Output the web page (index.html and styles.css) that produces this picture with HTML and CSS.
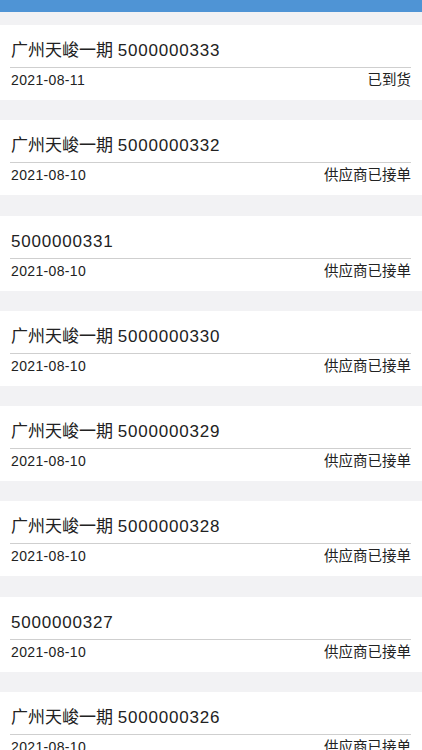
FILE: index.html
```html
<!DOCTYPE html>
<html lang="zh-CN">
<head>
<meta charset="utf-8">
<title>订单列表</title>
<link rel="stylesheet" href="styles.css">
</head>
<body>
<div class="topbar"></div>
<div class="list">
  <div class="card"><div class="title">广州天峻一期 <span class="num">5000000333</span></div><div class="meta"><span class="date">2021-08-11</span><span class="status">已到货</span></div></div>
  <div class="card"><div class="title">广州天峻一期 <span class="num">5000000332</span></div><div class="meta"><span class="date">2021-08-10</span><span class="status">供应商已接单</span></div></div>
  <div class="card"><div class="title"><span class="num">5000000331</span></div><div class="meta"><span class="date">2021-08-10</span><span class="status">供应商已接单</span></div></div>
  <div class="card"><div class="title">广州天峻一期 <span class="num">5000000330</span></div><div class="meta"><span class="date">2021-08-10</span><span class="status">供应商已接单</span></div></div>
  <div class="card"><div class="title">广州天峻一期 <span class="num">5000000329</span></div><div class="meta"><span class="date">2021-08-10</span><span class="status">供应商已接单</span></div></div>
  <div class="card"><div class="title">广州天峻一期 <span class="num">5000000328</span></div><div class="meta"><span class="date">2021-08-10</span><span class="status">供应商已接单</span></div></div>
  <div class="card"><div class="title"><span class="num">5000000327</span></div><div class="meta"><span class="date">2021-08-10</span><span class="status">供应商已接单</span></div></div>
  <div class="card"><div class="title">广州天峻一期 <span class="num">5000000326</span></div><div class="meta"><span class="date">2021-08-10</span><span class="status">供应商已接单</span></div></div>
</div>
</body>
</html>
```
FILE: styles.css
```css
html, body {
  margin: 0;
  padding: 0;
}
body {
  background: #f2f2f4;
  font-family: "Liberation Sans", "Noto Sans CJK SC", sans-serif;
  color: #222;
  overflow: hidden;
}
.topbar {
  height: 12px;
  background: #4f94d5;
}
.list {
  display: flex;
  flex-direction: column;
  gap: 20.3px;
  padding-top: 13px;
}
.card {
  background: #fff;
  height: 75px;
  padding: 0 11px 0 10px;
  display: flex;
  flex-direction: column;
}
.title {
  font-size: 17px;
  line-height: 24px;
  padding: 14px 0 4px 1px;
  border-bottom: 1px solid #cfcfcf;
  white-space: nowrap;
}
.num {
  letter-spacing: 0.8px;
}
.meta {
  display: flex;
  justify-content: space-between;
  font-size: 14px;
  line-height: 18px;
  padding: 3px 0 0 1px;
}
.date {
  letter-spacing: 0.35px;
}
.status {
  font-size: 14.5px;
}
```
